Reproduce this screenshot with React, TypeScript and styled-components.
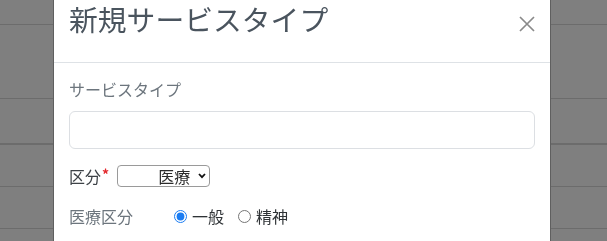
import React from 'react'
import styled, { createGlobalStyle } from 'styled-components'

const GlobalStyle = createGlobalStyle`
  html, body {
    margin: 0;
    padding: 0;
    background: #7f7f7f;
    font-family: "Noto Sans CJK JP", "Noto Sans", sans-serif;
    overflow: hidden;
  }
  * { box-sizing: border-box; }
`

// the page behind the dialog, darkened by the backdrop
const Backdrop = styled.div`
  display: flex;
  flex-direction: column;
  height: 241px;
  background: #7f7f7f;
`

const TableRow = styled.div<{ $h: number; $thick?: boolean }>`
  height: ${p => p.$h}px;
  flex-shrink: 0;
  border-bottom: ${p => (p.$thick ? 2 : 1)}px solid #6c6c6c;
`

const Dialog = styled.div`
  position: fixed;
  top: -1px;
  left: 53px;
  width: 498px;
  height: 260px;
  background: #fff;
  border: 1px solid #5f5f5f;
  border-radius: 0 0 6px 6px;
`

const Header = styled.div`
  display: flex;
  justify-content: space-between;
  align-items: flex-start;
  padding: 1px 15px 26px;
  border-bottom: 1px solid #dee2e6;
`

const Title = styled.h3`
  margin: 0;
  font-size: 28.8px;
  line-height: 35px;
  font-weight: 400;
  color: #4a545e;
`

const CloseButton = styled.button`
  display: flex;
  margin-top: 15px;
  padding: 0;
  width: 16px;
  height: 16px;
  border: 0;
  background: none;
  cursor: pointer;
`

const Body = styled.div`
  padding: 14px 15px 15px;
`

const FieldLabel = styled.label`
  display: block;
  font-size: 16px;
  line-height: 24px;
  color: #6c757d;
  margin-bottom: 10px;
`

const TextInput = styled.input`
  display: block;
  width: 100%;
  height: 38px;
  border: 1px solid #dcdfe3;
  border-radius: 6px;
  padding: 6px 12px;
  font-size: 16px;
  outline: none;
`

const Row = styled.div<{ $top: number }>`
  display: flex;
  align-items: center;
  height: 24px;
  margin-top: ${p => p.$top}px;
`

const RowLabel = styled.span<{ $muted?: boolean; $width?: number }>`
  font-size: 16px;
  line-height: 24px;
  color: ${p => (p.$muted ? '#6c757d' : '#3d4247')};
  ${p => (p.$width ? `width: ${p.$width}px;` : '')}
  flex-shrink: 0;
`

const Required = styled.span`
  display: inline-block;
  color: #e3262b;
  font-size: 14px;
  font-weight: 700;
  vertical-align: top;
  line-height: 18px;
  margin: 1px 0 0 1px;
`

const SelectWrap = styled.div`
  position: relative;
  margin-left: 8px;
`

const Select = styled.select`
  appearance: none;
  display: block;
  width: 93px;
  height: 22px;
  border: 1px solid #9a9a9a;
  border-radius: 4px;
  background: #fff;
  padding: 0 0 0 40px;
  font-family: inherit;
  font-size: 16px;
  line-height: 20px;
  color: #2b2b2b;
  outline: none;
`

const Chevron = styled.svg`
  position: absolute;
  right: 4px;
  top: 8px;
  pointer-events: none;
`

const RadioGroup = styled.div`
  display: flex;
  align-items: center;
`

const RadioOption = styled.label`
  display: flex;
  align-items: center;
  margin-right: 14px;
  font-size: 16px;
  line-height: 24px;
  color: #2f3336;
`

const Radio = styled.input`
  width: 13px;
  height: 13px;
  margin: 0 5px 0 0;
  accent-color: #1a7cf2;
`

export default function App() {
  return (
    <>
      <GlobalStyle />
      <Backdrop>
        <TableRow $h={25} />
        <TableRow $h={74} />
        <TableRow $h={46} $thick />
        <TableRow $h={42} />
        <TableRow $h={42} />
      </Backdrop>
      <Dialog>
        <Header>
          <Title>新規サービスタイプ</Title>
          <CloseButton aria-label="閉じる">
            <svg width="16" height="16" viewBox="0 0 16 16">
              <path d="M1 1 L15 15 M15 1 L1 15" stroke="#8a8a8a" strokeWidth="1.7" fill="none" />
            </svg>
          </CloseButton>
        </Header>
        <Body>
          <FieldLabel>サービスタイプ</FieldLabel>
          <TextInput type="text" />
          <Row $top={15}>
            <RowLabel>
              区分<Required>*</Required>
            </RowLabel>
            <SelectWrap>
              <Select defaultValue="medical">
                <option value="medical">医療</option>
                <option value="care">介護</option>
              </Select>
              <Chevron width="8" height="6" viewBox="0 0 8 6">
                <path d="M1 1 L4 4.2 L7 1" stroke="#111" strokeWidth="1.8" fill="none" />
              </Chevron>
            </SelectWrap>
          </Row>
          <Row $top={16}>
            <RowLabel $muted $width={105}>医療区分</RowLabel>
            <RadioGroup>
              <RadioOption>
                <Radio type="radio" name="kubun" defaultChecked />
                一般
              </RadioOption>
              <RadioOption>
                <Radio type="radio" name="kubun" />
                精神
              </RadioOption>
            </RadioGroup>
          </Row>
        </Body>
      </Dialog>
    </>
  )
}
